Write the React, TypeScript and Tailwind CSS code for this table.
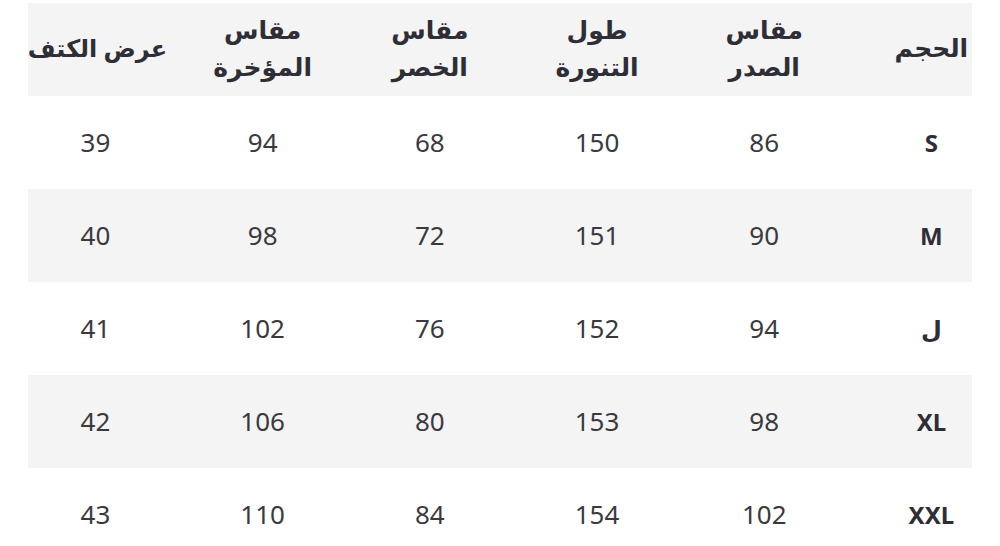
import React from "react";

const headers: string[][] = [
  ["الحجم"],
  ["مقاس", "الصدر"],
  ["طول", "التنورة"],
  ["مقاس", "الخصر"],
  ["مقاس", "المؤخرة"],
  ["عرض الكتف"],
];

const rows: string[][] = [
  ["S", "86", "150", "68", "94", "39"],
  ["M", "90", "151", "72", "98", "40"],
  ["ل", "94", "152", "76", "102", "41"],
  ["XL", "98", "153", "80", "106", "42"],
  ["XXL", "102", "154", "84", "110", "43"],
];

export default function App() {
  return (
    <div
      className="w-[1000px] h-[546px] bg-white overflow-hidden pt-[3px] px-[28px]"
      style={{ fontFamily: '"Noto Sans", "DejaVu Sans", sans-serif' }}
    >
      <div className="w-[944px] overflow-hidden">
        <div dir="rtl" className="w-[1003px] ml-[-16px] text-[#333338]">
          <div className="grid grid-cols-[repeat(6,167.2px)] h-[93px] bg-[#f4f4f4] items-center pb-[4px]">
            {headers.map((h, i) => (
              <div
                key={i}
                className={`text-center font-bold leading-[37px] text-[#2e2e36] ${i === 5 ? "text-[24px] pl-[4px]" : "text-[25px]"}`}
              >
                {h.map((l, j) => (
                  <div key={j} className="whitespace-nowrap">{l}</div>
                ))}
              </div>
            ))}
          </div>
          {rows.map((r, ri) => (
            <div
              key={ri}
              className={`grid grid-cols-[repeat(6,167.2px)] h-[93px] items-center ${ri % 2 === 1 ? "bg-[#f4f4f4]" : "bg-white"}`}
            >
              {r.map((c, ci) => (
                <div
                  key={ci}
                  className={`text-center ${ci === 0 ? "font-bold text-[24px] text-[#2e2e36]" : "text-[26px] text-[#3a3a3e]"}`}
                >
                  {c}
                </div>
              ))}
            </div>
          ))}
        </div>
      </div>
    </div>
  );
}
